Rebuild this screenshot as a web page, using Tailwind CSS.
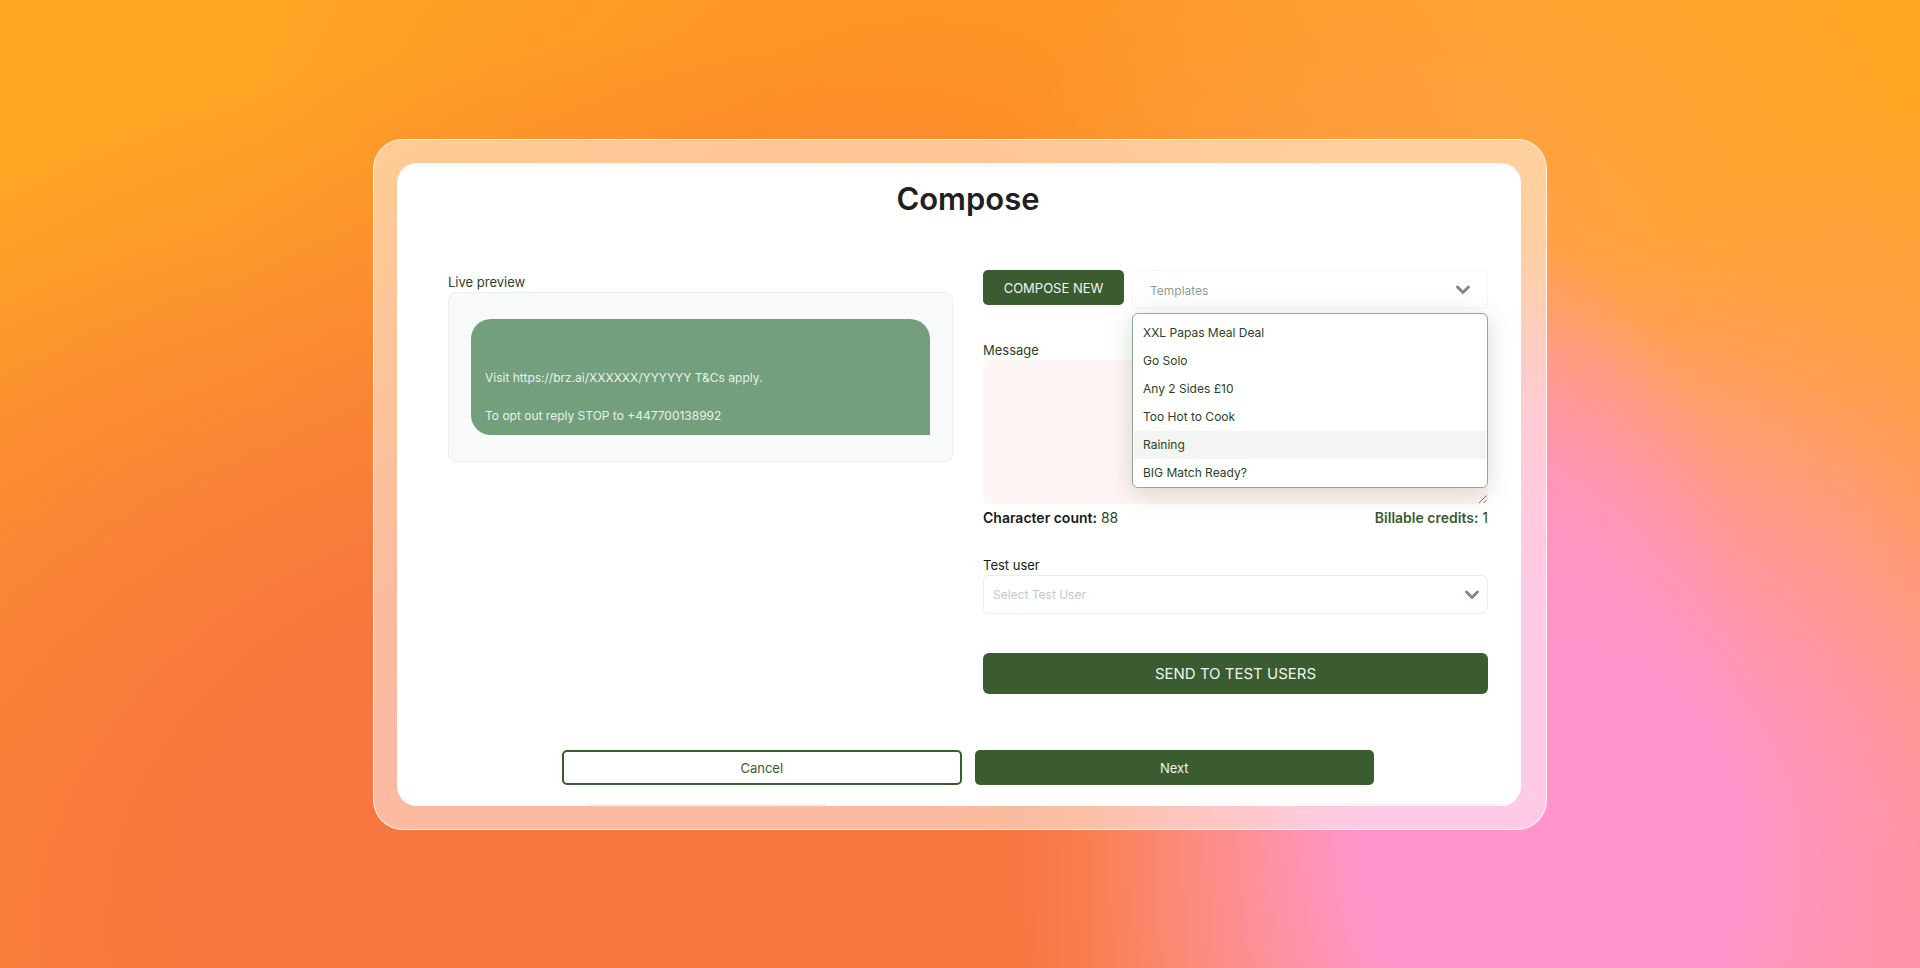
<!DOCTYPE html>
<html lang="en">
<head>
    <meta charset="UTF-8">
    <meta name="viewport" content="width=device-width, initial-scale=1.0">
    <title>Compose</title>
    <script src="https://cdn.jsdelivr.net/npm/@tailwindcss/browser@4"></script>
    <style>
        .backdrop {
            background:
                radial-gradient(ellipse 29% 66% at 81% 89%, #ff95ca 0%, #ff95ca 34%, rgba(255, 149, 200, 0.55) 62%, rgba(255, 150, 170, 0.15) 86%, rgba(255, 150, 150, 0) 100%),
                radial-gradient(ellipse 13% 44% at 78% 68%, #ff95ca 0%, rgba(255, 149, 195, 0.7) 50%, rgba(255, 150, 150, 0) 100%),
                radial-gradient(ellipse 26% 60% at 76% 38%, rgba(255, 160, 90, 0.75) 0%, rgba(255, 160, 80, 0) 100%),
                radial-gradient(ellipse 24% 90% at 100% 100%, rgba(255, 145, 150, 0.95) 0%, rgba(255, 145, 110, 0) 100%),
                radial-gradient(ellipse 58% 88% at 32% 92%, #f7753f 0%, #f7763e 38%, rgba(250, 130, 48, 0) 100%),
                radial-gradient(ellipse 50% 75% at 8% 100%, rgba(250, 125, 55, 0.7) 0%, rgba(250, 130, 50, 0) 100%),
                radial-gradient(ellipse 36% 60% at 48% 25%, #fd8a28 0%, rgba(253, 138, 40, 0) 100%),
                #ffa524;
        }
    </style>
</head>
<body class="backdrop min-h-screen flex items-center justify-center font-[Inter,sans-serif] text-[#2b3f28]">
    <!-- Glass frame -->
    <div class="w-full max-w-[1174px] rounded-[30px] border border-white/80 bg-white/50 p-[23px] pr-[25px]">
        <main class="overflow-hidden rounded-[20px] border-t-4 border-[#f8f9f9] bg-white">
            <div class="pt-3 pr-[33px] pl-[51px]">
                <h1 class="text-center text-[31px] leading-10 font-semibold text-[#1f211f]">Compose</h1>

                <div class="mt-[51px] grid grid-cols-2 gap-[30px]">
                    <!-- Live preview -->
                    <section class="pt-[2px]">
                        <h2 class="text-[13px] leading-5">Live preview</h2>
                        <div class="rounded-lg border border-[#f0eeee] bg-[#f8f9f9] px-[22px] py-[26px]">
                            <div class="rounded-[20px] rounded-br-none bg-[#739f7d] px-[14px] pt-[49px] pb-[10px] text-[12px] leading-[19px] text-[#eaf1eb]">
                                <p>Visit https://brz.ai/XXXXXX/YYYYYY T&amp;Cs apply.</p>
                                <p class="mt-[19px]">To opt out reply STOP to +447700138992</p>
                            </div>
                        </div>
                    </section>

                    <!-- Compose form -->
                    <form>
                        <div class="flex items-start gap-2">
                            <button type="button" class="h-[35px] w-[141px] rounded-[5px] bg-[#3a5c30] pt-[3px] text-[13px] text-[#f1f5ef]">COMPOSE NEW</button>
                            <div class="relative flex-1">
                                <select aria-label="Templates" class="block h-[39px] w-full appearance-none rounded-md border border-[#f5f6f5] bg-white px-[17px] pt-[3px] text-[12px] text-[#8c9f8b]">
                                    <option>Templates</option>
                                </select>
                                <svg class="pointer-events-none absolute top-[14px] right-[17px]" width="16" height="12" viewBox="0 0 16 12" fill="none" stroke="#7c8c7b" stroke-width="3" stroke-linecap="round" stroke-linejoin="round"><path d="M2.5 3 8 8.5 13.5 3"/></svg>

                                <ul role="listbox" aria-label="Template list" class="absolute top-full right-0 left-0 z-10 mt-1 rounded-md border border-[#8fa993] bg-white px-px pt-[5px] text-[12px] leading-7 shadow-[0_5px_24px_rgba(60,90,65,0.22)]">
                                    <li role="option" class="px-[9px]">XXL Papas Meal Deal</li>
                                    <li role="option" class="px-[9px]">Go Solo</li>
                                    <li role="option" class="px-[9px]">Any 2 Sides £10</li>
                                    <li role="option" class="px-[9px]">Too Hot to Cook</li>
                                    <li role="option" aria-selected="true" class="bg-[#f3f5f4] px-[9px]">Raining</li>
                                    <li role="option" class="px-[9px]">BIG Match Ready?</li>
                                </ul>
                            </div>
                        </div>

                        <label for="message" class="mt-[31px] block text-[13px] leading-5">Message</label>
                        <div class="relative">
                            <textarea id="message" class="block h-36 w-full resize-none rounded-md bg-[#fff5f4] p-3 text-[13px]"></textarea>
                            <svg class="absolute right-0 bottom-0" width="10" height="10" viewBox="0 0 10 10" fill="none" stroke="#6b7b68" stroke-width="1"><path d="M1 9 8.5 1.5M5.5 9 8.5 6"/></svg>
                        </div>
                        <div class="mt-1 flex justify-between text-sm leading-5">
                            <p><strong class="font-semibold text-[#151c14]">Character count:</strong> 88</p>
                            <p><strong class="font-semibold text-[#3a5c30]">Billable credits:</strong> 1</p>
                        </div>

                        <label for="test-user" class="mt-[27px] block text-[13px] leading-5 text-[#151c14]">Test user</label>
                        <div class="relative">
                            <select id="test-user" class="block h-[39px] w-full appearance-none rounded-md border border-[#ececec] bg-white px-[9px] pt-px text-[12px] text-[#c4cac3]">
                                <option>Select Test User</option>
                            </select>
                            <svg class="pointer-events-none absolute top-[14px] right-[8px]" width="16" height="12" viewBox="0 0 16 12" fill="none" stroke="#7c8c7b" stroke-width="3" stroke-linecap="round" stroke-linejoin="round"><path d="M2.5 3 8 8.5 13.5 3"/></svg>
                        </div>

                        <button type="button" class="mt-[39px] h-[41px] w-full rounded-md bg-[#3a5c30] pt-[3px] text-[15px] text-[#f1f5ef]">SEND TO TEST USERS</button>
                    </form>
                </div>

                <!-- Footer actions -->
                <div class="mx-auto mt-14 grid max-w-[812px] grid-cols-2 gap-[13px] text-[13px]">
                    <button type="button" class="h-[35px] rounded-[5px] border-2 border-[#3a5c30] bg-white pt-[3px] text-[#3a5c30]">Cancel</button>
                    <button type="button" class="h-[35px] rounded-[5px] bg-[#3a5c30] pt-[3px] text-[#f1f5ef]">Next</button>
                </div>
            </div>

            <!-- Top edges of the panels below the fold -->
            <div class="mt-[19px] flex justify-between pr-4 pl-[189px]">
                <div class="h-[2px] w-60 bg-[#edf2f1]"></div>
                <div class="h-[2px] w-52 bg-[#f4f5f5]"></div>
            </div>
        </main>
    </div>
</body>
</html>
